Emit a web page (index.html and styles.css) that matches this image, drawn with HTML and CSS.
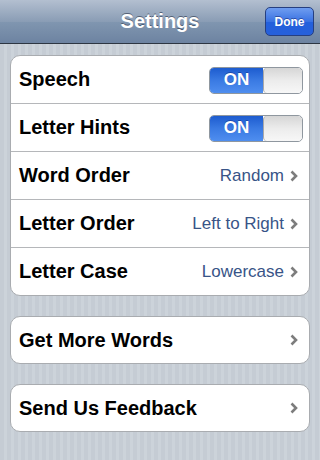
FILE: index.html
```html
<!DOCTYPE html>
<html>
<head>
<meta charset="utf-8">
<link rel="stylesheet" href="styles.css">
</head>
<body>
<div class="nav">
  <div class="title">Settings</div>
  <div class="done">Done</div>
</div>
<div class="content">
  <div class="group">
    <div class="row"><span class="label">Speech</span><div class="switch"><div class="on">ON</div><div class="knob"></div></div></div>
    <div class="row"><span class="label">Letter Hints</span><div class="switch"><div class="on">ON</div><div class="knob"></div></div></div>
    <div class="row link"><span class="label">Word Order</span><span class="value">Random</span><svg class="chev" width="8" height="12" viewBox="0 0 8 12"><path d="M1.5 1.5 L6 6 L1.5 10.5" fill="none" stroke="#7d7d7d" stroke-width="2.6"/></svg></div>
    <div class="row link"><span class="label">Letter Order</span><span class="value">Left to Right</span><svg class="chev" width="8" height="12" viewBox="0 0 8 12"><path d="M1.5 1.5 L6 6 L1.5 10.5" fill="none" stroke="#7d7d7d" stroke-width="2.6"/></svg></div>
    <div class="row link"><span class="label">Letter Case</span><span class="value">Lowercase</span><svg class="chev" width="8" height="12" viewBox="0 0 8 12"><path d="M1.5 1.5 L6 6 L1.5 10.5" fill="none" stroke="#7d7d7d" stroke-width="2.6"/></svg></div>
  </div>
  <div class="group">
    <div class="row link single"><span class="label">Get More Words</span><svg class="chev" width="8" height="12" viewBox="0 0 8 12"><path d="M1.5 1.5 L6 6 L1.5 10.5" fill="none" stroke="#7d7d7d" stroke-width="2.6"/></svg></div>
  </div>
  <div class="group">
    <div class="row link single"><span class="label">Send Us Feedback</span><svg class="chev" width="8" height="12" viewBox="0 0 8 12"><path d="M1.5 1.5 L6 6 L1.5 10.5" fill="none" stroke="#7d7d7d" stroke-width="2.6"/></svg></div>
  </div>
</div>
</body>
</html>
```
FILE: styles.css
```css
html, body {
  margin: 0;
  padding: 0;
}
body {
  width: 320px;
  height: 460px;
  overflow: hidden;
  font-family: "Liberation Sans", Arial, sans-serif;
  background: repeating-linear-gradient(90deg, #c5ccd4 0, #c5ccd4 4px, #ccd3da 4px, #ccd3da 7px);
}
.nav {
  height: 43px;
  border-bottom: 1px solid #2d3642;
  background: linear-gradient(to bottom, #b3bfd0 0%, #8a9db5 50%, #8096b0 51%, #6d83a1 100%);
  display: flex;
  align-items: center;
  justify-content: center;
  position: relative;
}
.title {
  color: #fff;
  font-weight: bold;
  font-size: 20px;
  text-shadow: 0 -1px 0 rgba(40, 50, 70, 0.6);
}
.done {
  position: absolute;
  right: 6px;
  top: 7px;
  width: 49px;
  height: 29px;
  box-sizing: border-box;
  border: 1px solid #263f80;
  border-radius: 5px;
  background: linear-gradient(to bottom, #6f9df0 0%, #3a72e2 50%, #2360dc 51%, #2660db 100%);
  color: #fff;
  font-weight: bold;
  font-size: 12px;
  display: flex;
  align-items: center;
  justify-content: center;
  text-shadow: 0 -1px 0 rgba(0, 0, 60, 0.4);
}
.content {
  padding-top: 11px;
  display: flex;
  flex-direction: column;
  gap: 20px;
}
.group {
  margin: 0 10px;
  background: #fff;
  border: 1px solid #a9acb0;
  border-radius: 10px;
  overflow: hidden;
}
.row {
  height: 47px;
  display: flex;
  align-items: center;
  padding: 0 6px 0 8px;
  border-bottom: 1px solid #b5b7ba;
}
.row:last-child {
  border-bottom: none;
}
.row.single {
  height: 46px;
}
.row.link {
  padding-right: 11px;
}
.label {
  font-weight: bold;
  font-size: 20px;
  color: #000;
  flex: 1;
}
.value {
  font-size: 17px;
  color: #385487;
  margin-right: 6px;
}
.chev {
  display: block;
}
.switch {
  width: 94px;
  height: 27px;
  box-sizing: border-box;
  border: 1px solid #8f979f;
  border-radius: 5px;
  display: flex;
  overflow: hidden;
  margin-top: 1px;
}
.on {
  width: 53px;
  background: linear-gradient(to bottom, #1d5ccf 0%, #3a7ae3 50%, #4f8eef 100%);
  color: #fff;
  font-weight: bold;
  font-size: 17px;
  display: flex;
  align-items: center;
  justify-content: center;
  text-shadow: 0 -1px 0 rgba(0, 0, 60, 0.3);
}
.knob {
  flex: 1;
  background: linear-gradient(to bottom, #d6d6d6 0%, #ececec 50%, #f7f7f7 100%);
  border-left: 1px solid #a8a8a8;
  border-radius: 4px;
}
```
